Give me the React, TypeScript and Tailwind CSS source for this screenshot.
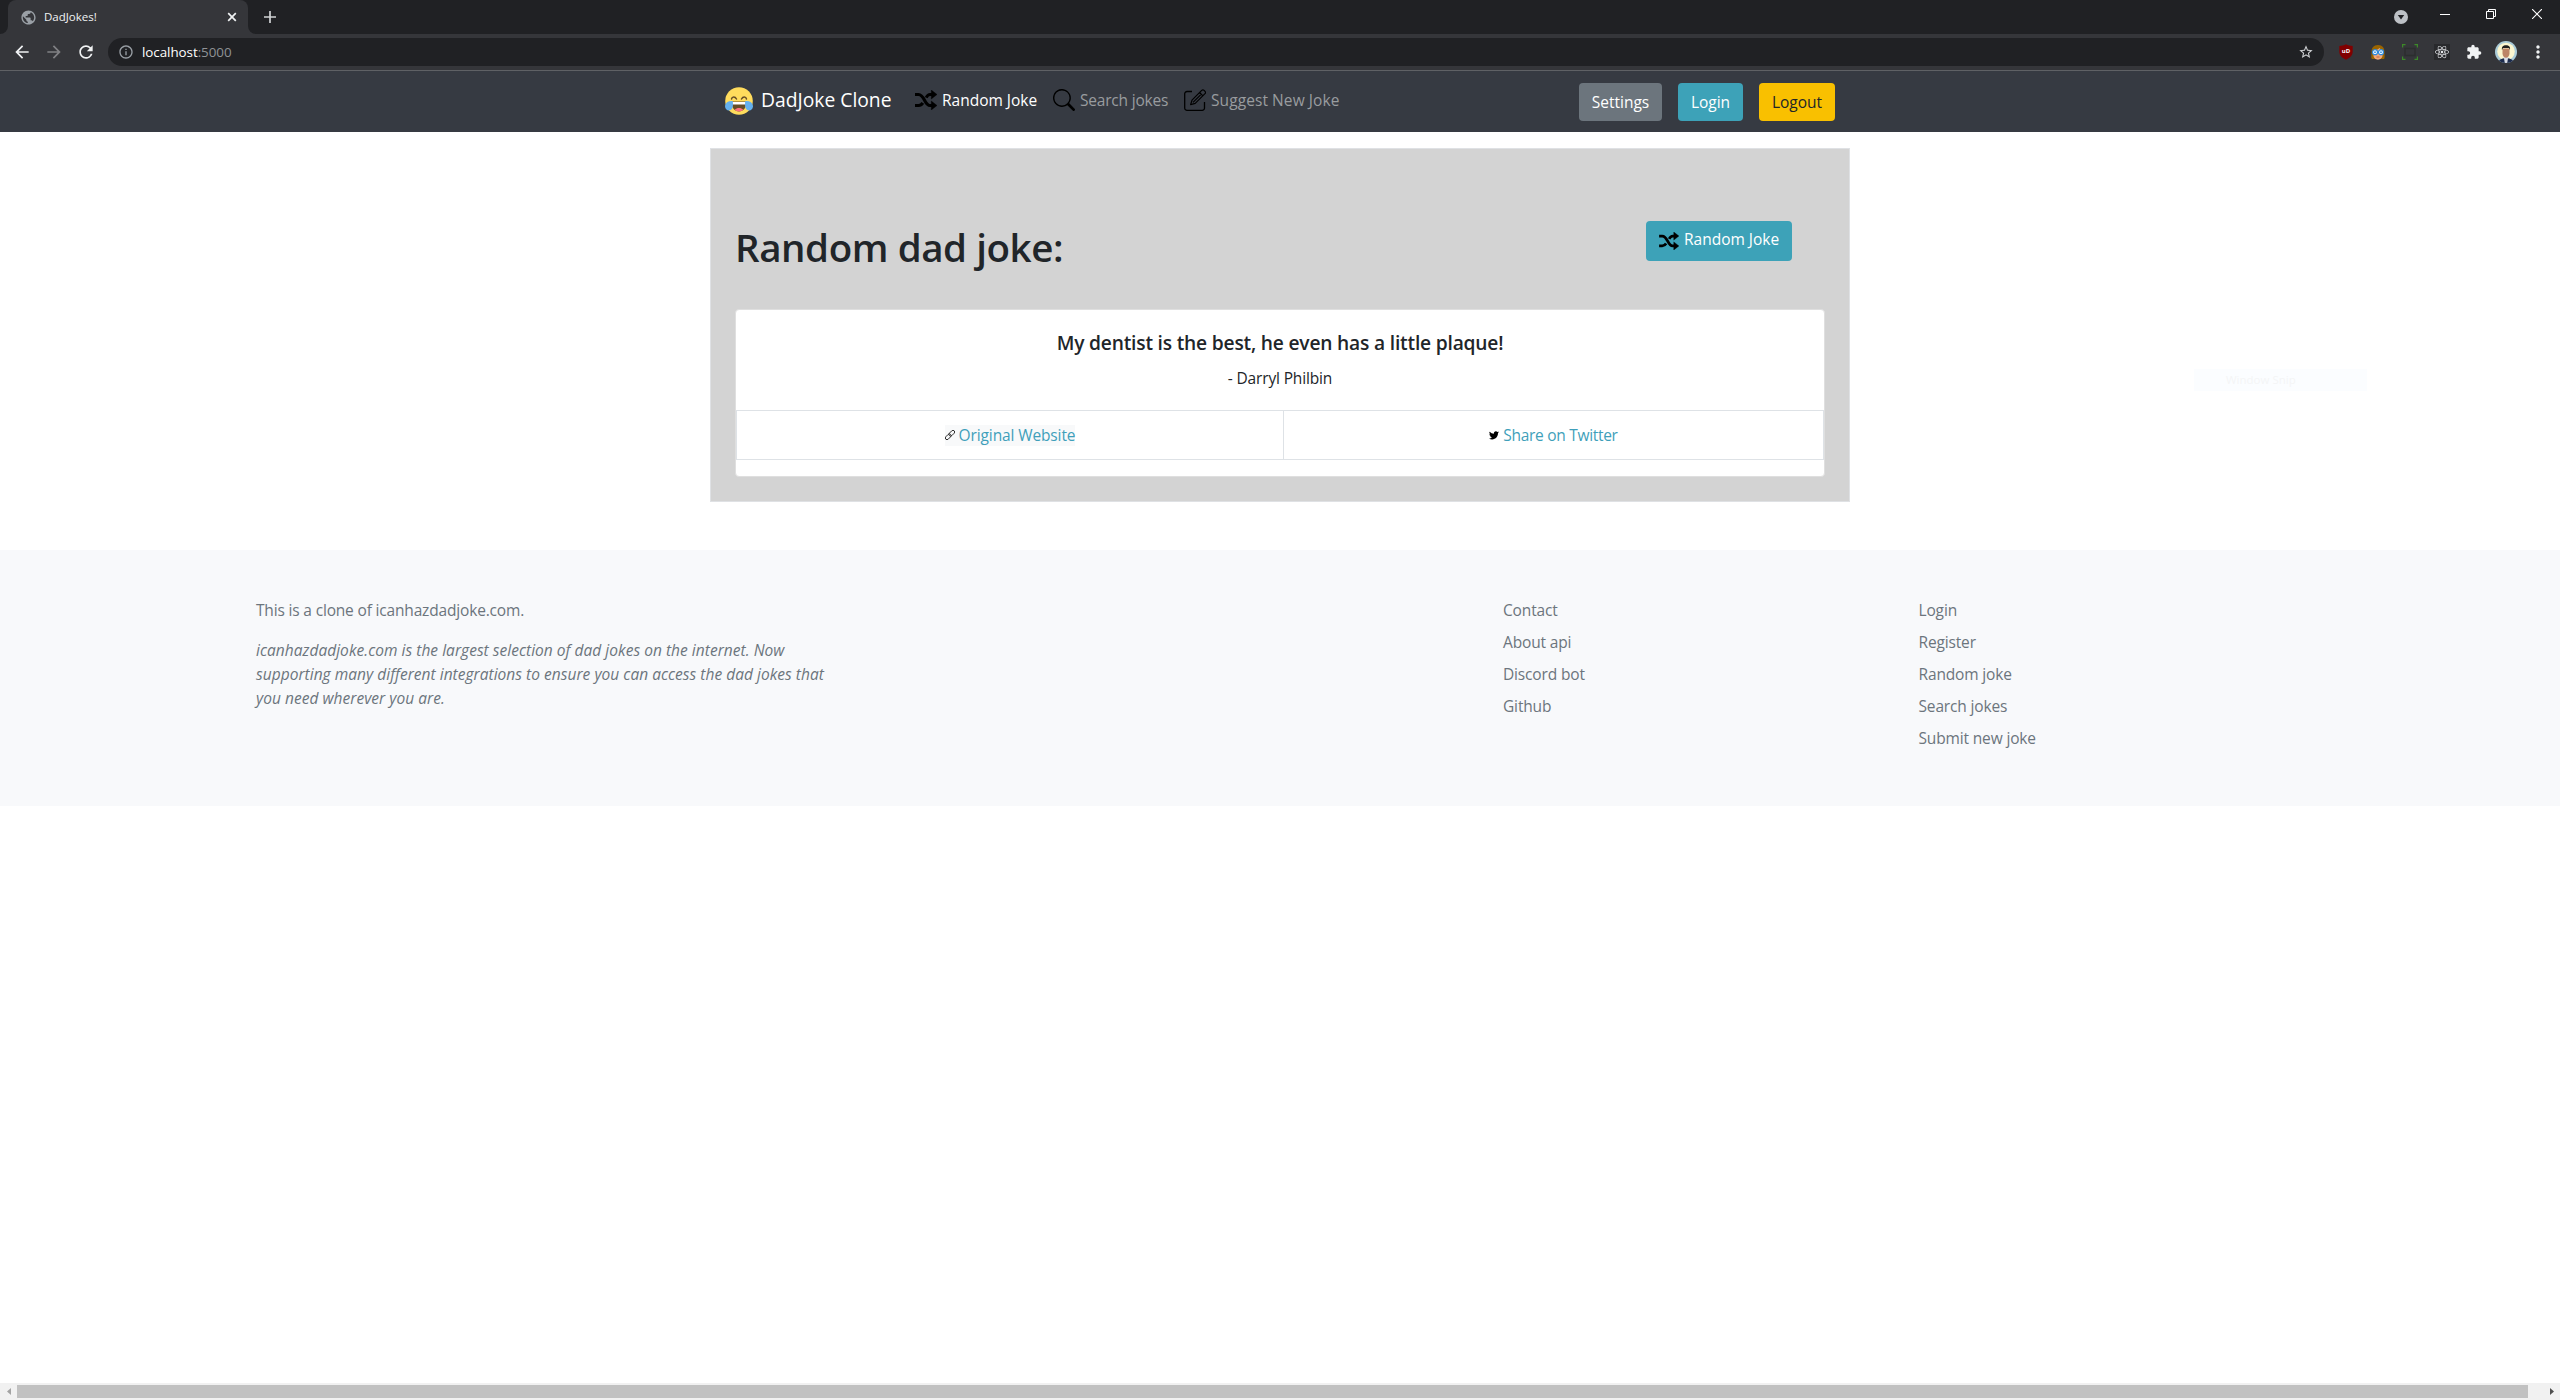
import type { ReactNode } from "react";
import {
  MdArrowBack,
  MdArrowForward,
  MdExtension,
  MdInfoOutline,
  MdMoreVert,
  MdPublic,
  MdRefresh,
  MdStarOutline,
} from "react-icons/md";
import { BsSearch, BsTwitter } from "react-icons/bs";
import { FaReact } from "react-icons/fa";

function JoyIcon() {
  return (
    <svg viewBox="0 0 28 28" className="size-7">
      <circle cx="14" cy="14" r="13.8" fill="#ffdc5d" />
      <path d="M6.5 12c.6-2.6 3.6-2.6 5 0M16.5 12c1.4-2.6 4.4-2.6 5 0" fill="none" stroke="#664e27" strokeWidth="1.5" strokeLinecap="round" />
      <path d="M6.800 14.500h14.400c.6 6.500-3.200 10-7.200 10s-7.800-3.500-7.200-10z" fill="#664e27" />
      <path d="M7 15h14v2.500H7z" fill="#fff" />
      <path d="M9.800 22.800c2-2.400 6.400-2.400 8.400 0-2 2.200-6.400 2.200-8.400 0z" fill="#ff717f" />
      <path d="M7.800 14.200C5 13.400.8 14.800.1 18.400c-.6 3.400 2.600 6.200 5.600 4.600 2.600-1.400 2.400-5.600 2.100-8.800z" fill="#65b1ef" />
      <path d="M20.200 14.200c2.800-.8 7 .6 7.700 4.200.6 3.400-2.600 6.200-5.600 4.600-2.600-1.400-2.400-5.600-2.100-8.800z" fill="#65b1ef" />
    </svg>
  );
}

function ShuffleIcon({ className }: { className: string }) {
  return (
    <svg viewBox="0 0 22 20" className={className}>
      <path
        d="M0 4.500h3.500C9.500 4.500 9.500 15.500 15 15.500h2M0 15.500h3.500c2 0 3.300-1 4.300-2.600M11.200 7.600C12.200 5.700 13.300 4.500 15 4.500h2"
        fill="none"
        stroke="#000"
        strokeWidth="3.1"
      />
      <path d="M16.300 0 22 4.500 16.300 9zM16.300 11 22 15.500 16.300 20z" fill="#000" stroke="#000" strokeWidth=".4" strokeLinejoin="round" />
    </svg>
  );
}

function ComposeIcon() {
  return (
    <svg viewBox="0 0 22 22" className="size-[22px]">
      <g fill="none" stroke="#000">
        <path d="M8 2.500H3A2.300 2.300 0 0 0 .7 4.800v14.200a2.300 2.300 0 0 0 2.300 2.300h15.200a2.300 2.300 0 0 0 2.300-2.300v-6" strokeWidth="1.300" />
        <path d="M6.600 15.600 8 11.200 17.700 1.400a1.700 1.700 0 0 1 2.400 0l.9.900a1.700 1.700 0 0 1 0 2.400L11.200 14.400zM15.600 3.500l3.300 3.300M9 13.400l7.600-7.600" strokeWidth="1.200" strokeLinejoin="round" />
      </g>
    </svg>
  );
}

function ChainIcon() {
  return (
    <svg viewBox="0 0 10 10" className="size-2.5">
      <g fill="none" stroke="#222" strokeWidth=".9" transform="rotate(-45 5 5)">
        <rect x="-.9" y="3.300" width="6.700" height="3.400" rx="1.700" />
        <rect x="4.200" y="3.300" width="6.700" height="3.400" rx="1.700" />
      </g>
    </svg>
  );
}

function UblockIcon() {
  return (
    <svg viewBox="0 0 16 16" className="size-4">
      <path d="M8 .3C6 1.400 3.500 2 1.300 2v5.500c0 4 3 6.600 6.700 8.200 3.700-1.600 6.700-4.200 6.700-8.200V2C12.500 2 10 1.400 8 .3z" fill="#800000" />
      <text x="8" y="9.300" fill="#fff" textAnchor="middle" fontSize="6" fontWeight="700" fontFamily="Open Sans, sans-serif">uD</text>
    </svg>
  );
}

function FaceIcon() {
  return (
    <svg viewBox="0 0 16 16" className="size-4">
      <path d="M8 1C3.500 1 1.500 4 1.500 8S.8 13.500 2 15h12c1.200-1.500.5-3 .5-7S12.500 1 8 1z" fill="#9a6400" />
      <path d="M3.500 6c3 .2 5-.8 6-2 .8 1.200 2 1.800 3 2v5.500c0 2-2 4.200-4.500 4.200s-4.500-2.200-4.500-4.200z" fill="#f0a97c" />
      <circle cx="5" cy="8.200" r="2.500" fill="#fff" stroke="#2a8ae0" strokeWidth="1.200" />
      <circle cx="11" cy="8.200" r="2.500" fill="#fff" stroke="#2a8ae0" strokeWidth="1.200" />
      <circle cx="5" cy="8.200" r=".9" fill="#2a8ae0" />
      <circle cx="11" cy="8.200" r=".9" fill="#2a8ae0" />
      <path d="M6.500 13h3" stroke="#b3512f" strokeWidth=".8" />
    </svg>
  );
}

function FrameIcon() {
  return (
    <svg viewBox="0 0 16 16" className="size-4">
      <path d="M3 4.500h10v7H3z" fill="none" stroke="#2c2e2f" strokeWidth="1.500" />
      <path d="M.6 3.500V.6h2.900M12.500.6h2.900v2.900M15.400 12.500v2.900h-2.900M3.500 15.400H.6v-2.900" fill="none" stroke="#3c8a28" strokeWidth="1.200" />
    </svg>
  );
}

function Avatar() {
  return (
    <svg viewBox="0 0 22 22" className="size-[22px]">
      <defs>
        <clipPath id="avatar-clip">
          <circle cx="11" cy="11" r="11" />
        </clipPath>
      </defs>
      <g clipPath="url(#avatar-clip)">
        <path d="M0 0h22v22H0z" fill="#a9cbd8" />
        <circle cx="11" cy="10.500" r="8.800" fill="#fbf6cf" />
        <path d="M3.500 22c0-3.200 2.500-4.600 7.500-5 5 .4 7.500 1.800 7.500 5z" fill="#1d2b4d" />
        <path d="M8.800 16h4.400L12.200 22H9.800z" fill="#d9dde6" />
        <path d="M7.500 7.500h7v4.700c0 2.600-1.600 4.600-3.500 4.600s-3.500-2-3.500-4.600z" fill="#bd8566" />
        <path d="M7 9c-.6-3.200 1-4.800 4-4.800S15.600 5.800 15 9l-1-2H8z" fill="#20201f" />
      </g>
    </svg>
  );
}

/* Browser frame: tab strip and toolbar */

function TabStrip() {
  return (
    <div className="flex h-[34px] items-center bg-[#202124]">
      <div className="flex h-full w-2 items-end bg-[#35363a]">
        <div className="h-full w-2 rounded-br-lg bg-[#202124]" />
      </div>
      <div className="h-full bg-[#202124]">
        <div className="flex h-full w-60 items-center rounded-t-lg bg-[#35363a] pr-[11px] pl-3">
          <MdPublic className="size-[17px] text-[#9aa0a6]" />
          <span className="ml-[7px] flex-1 text-[11.5px] text-[#f1f3f4]">DadJokes!</span>
          <svg viewBox="0 0 10 10" className="size-2.5">
            <path d="M1.200 1.200l7.600 7.600M8.800 1.200L1.200 8.800" stroke="#f1f3f4" strokeWidth="1.700" />
          </svg>
        </div>
      </div>
      <div className="h-full w-2 bg-[#35363a]">
        <div className="h-full w-2 rounded-bl-lg bg-[#202124]" />
      </div>
      <svg viewBox="0 0 12 12" className="ml-2 size-3">
        <path d="M6 0v12M0 6h12" stroke="#d0d2d4" strokeWidth="1.700" />
      </svg>
      <div className="flex-1" />
      <svg viewBox="0 0 14 14" className="mr-8 size-3.5 shrink-0">
        <circle cx="7" cy="7" r="7" fill="#bdc1c6" />
        <path d="M3.800 5h6.400L7 9.500z" fill="#202124" />
      </svg>
      <div className="mr-[18px] flex items-center gap-9 pb-1.5">
        <svg viewBox="0 0 10 10" className="size-2.5"><path d="M0 5.500h10" stroke="#fff" /></svg>
        <svg viewBox="0 0 10 10" className="size-2.5">
          <path d="M.5 2.500h7v7h-7zM2.500 2.500v-2h7v7h-2" fill="none" stroke="#fff" />
        </svg>
        <svg viewBox="0 0 10 10" className="size-2.5"><path d="M0 0l10 10M10 0L0 10" stroke="#fff" strokeWidth="1.100" /></svg>
      </div>
    </div>
  );
}

function Toolbar() {
  return (
    <div className="flex h-[37px] items-center border-b border-[#5f6165] bg-[#35363a] pr-3 pl-3">
      <div className="flex w-24 gap-3">
        <MdArrowBack className="size-5 text-[#f1f3f4]" />
        <MdArrowForward className="size-5 text-[#808184]" />
        <MdRefresh className="size-5 text-[#f1f3f4]" />
      </div>
      <div className="flex h-7 flex-1 items-center rounded-full bg-[#202124] pr-2.5 pl-2.5">
        <MdInfoOutline className="size-4 text-[#9aa0a6]" />
        <span className="ml-2 flex-1 text-[13.4px] tracking-[-0.05px] text-white">
          localhost<span className="text-[#8f9296]">:5000</span>
        </span>
        <MdStarOutline className="size-4 text-[#d0d2d4]" />
      </div>
      <div className="ml-3.5 flex items-center gap-4">
        <UblockIcon />
        <FaceIcon />
        <FrameIcon />
        <div className="flex size-4 items-center justify-center bg-[#28292c]">
          <FaReact className="size-3.5 text-[#e8eaed]" />
        </div>
        <MdExtension className="size-4 text-[#f1f3f4]" />
      </div>
      <div className="ml-[13px]"><Avatar /></div>
      <MdMoreVert className="ml-[11px] size-5 text-[#f1f3f4]" />
    </div>
  );
}

/* Site */

function NavItem({ icon, label, className }: { icon: ReactNode; label: string; className: string }) {
  return (
    <a className={`flex items-center gap-[5px] ${className}`}>
      {icon}
      <span>{label}</span>
    </a>
  );
}

function NavBar() {
  return (
    <nav className="h-[61px] bg-[#363a42] pt-3">
      <div className="mx-auto flex w-[1110px] items-start">
        <a className="flex h-9 w-[190px] items-center gap-2 text-[19.3px] text-white">
          <JoyIcon />
          <span className="-mt-0.5 whitespace-nowrap">DadJoke Clone</span>
        </a>
        <div className="flex h-[34px] items-center leading-6">
          <NavItem icon={<ShuffleIcon className="h-5 w-[22px]" />} label="Random Joke" className="w-[138px] text-white" />
          <NavItem icon={<BsSearch className="size-[22px] text-black" />} label="Search jokes" className="w-[131px] tracking-[-0.2px] text-[#999c9f]" />
          <NavItem icon={<ComposeIcon />} label="Suggest New Joke" className="tracking-[0.08px] text-[#999c9f]" />
        </div>
        <div className="ml-auto flex gap-4">
          <button className="h-[38px] w-[83px] rounded bg-[#6c757d] pt-0.5 text-white">Settings</button>
          <button className="h-[38px] w-[65px] rounded bg-[#3da2b8] pt-0.5 text-white">Login</button>
          <button className="h-[38px] w-[76px] rounded bg-[#f9c000] pt-0.5 text-[#212529]">Logout</button>
        </div>
      </div>
    </nav>
  );
}

function JokePanel() {
  return (
    <section className="mx-auto mt-4 h-[354px] w-[1140px] border border-[#dfe1e4] bg-[#d3d3d3] px-6 pt-[72px] text-[#212529]">
      <div className="flex items-start justify-between pr-[33px]">
        <h1 className="pt-0.5 text-[38.5px] leading-[48px] font-semibold tracking-[-0.42px]">Random dad joke:</h1>
        <button className="flex h-10 w-[146px] items-center rounded bg-[#3da2b8] pl-[13px] text-white">
          <ShuffleIcon className="h-[18px] w-5" />
          <span className="-mt-0.5 ml-[5px]">Random Joke</span>
        </button>
      </div>
      <div className="mt-[38px] h-[168px] rounded border border-[#dfdfdf] bg-white text-center leading-6">
        <div className="h-[100px] pt-[21px]">
          <h5 className="text-[19.2px] font-semibold tracking-[-0.185px]">My dentist is the best, he even has a little plaque!</h5>
          <p className="mt-[11px] tracking-[-0.15px]">- Darryl Philbin</p>
        </div>
        <div className="flex h-[50px] border border-[#dee2e6] text-[#3f9fba]">
          <div className="flex w-[547px] items-center justify-center border-r border-[#dee2e6]">
            <a className="flex h-[21px] items-center gap-1 bg-[#f8f9fa]">
              <ChainIcon />
              <span className="tracking-[-0.12px]">Original Website</span>
            </a>
          </div>
          <div className="flex flex-1 items-center justify-center">
            <a className="flex h-[21px] items-center gap-1">
              <BsTwitter className="size-2.5 text-black" />
              <span className="tracking-[-0.3px]">Share on Twitter</span>
            </a>
          </div>
        </div>
      </div>
    </section>
  );
}

const infoLinks = ["Contact", "About api", "Discord bot", "Github"];
const siteLinks = ["Login", "Register", "Random joke", "Search jokes", "Submit new joke"];

function LinkColumn({ items }: { items: string[] }) {
  return (
    <ul className="flex w-[415.5px] flex-col gap-2 tracking-[-0.15px]">
      {items.map((item) => (
        <li key={item}>{item}</li>
      ))}
    </ul>
  );
}

function Footer() {
  return (
    <footer className="mt-12 flex h-64 bg-[#f8f9fb] pt-12 pl-64 leading-6 text-[#6c757d]">
      <div className="w-[1247px]">
        <p className="tracking-[-0.17px]">This is a clone of icanhazdadjoke.com.</p>
        <p className="mt-4 whitespace-nowrap italic tracking-[0.03px]">
          icanhazdadjoke.com is the largest selection of dad jokes on the internet. Now
          <br />
          supporting many different integrations to ensure you can access the dad jokes that
          <br />
          you need wherever you are.
        </p>
      </div>
      <LinkColumn items={infoLinks} />
      <LinkColumn items={siteLinks} />
    </footer>
  );
}

function HorizontalScrollbar() {
  return (
    <div className="flex h-[17px] items-center bg-[#f1f1f1]">
      <div className="flex w-[17px] justify-center">
        <svg viewBox="0 0 4 7" className="h-[7px] w-1"><path d="M4 0v7L0 3.500z" fill="#a3a3a3" /></svg>
      </div>
      <div className="h-[13px] w-[2511px] bg-[#c1c1c1]" />
      <div className="ml-auto flex w-[17px] justify-center">
        <svg viewBox="0 0 4 7" className="h-[7px] w-1"><path d="M0 0v7l4-3.500z" fill="#505050" /></svg>
      </div>
    </div>
  );
}

export default function App() {
  return (
    <div className="relative flex h-[1400px] w-[2560px] flex-col overflow-hidden bg-white font-['Open_Sans',sans-serif] text-[15.5px]">
      <TabStrip />
      <Toolbar />
      <NavBar />
      <JokePanel />
      <Footer />
      <div className="flex-1" />
      <HorizontalScrollbar />
      <div className="absolute top-[369px] left-[2194px] h-[22px] w-[173px] bg-[#fbfdff] pl-8 text-[11.5px] leading-[22px] text-[#f4f5f6]">
        Window Snip
      </div>
    </div>
  );
}
